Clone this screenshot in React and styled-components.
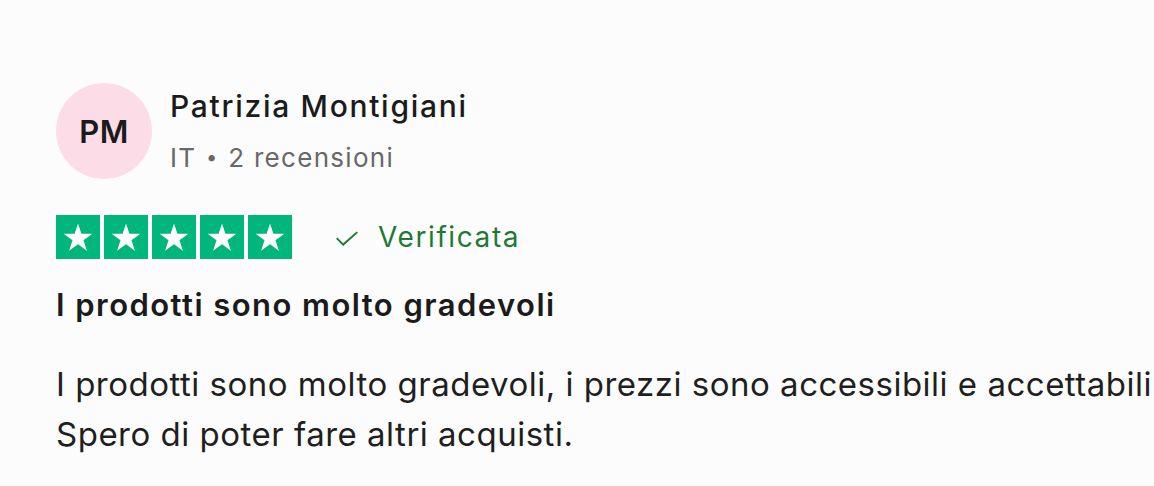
import styled, { createGlobalStyle } from "styled-components";

const GlobalStyle = createGlobalStyle`
  html, body {
    margin: 0;
    padding: 0;
    background: #fcfcfc;
    overflow: hidden;
  }
  body {
    font-family: Inter, "Liberation Sans", sans-serif;
    color: #1b1b1b;
  }
`;

const Card = styled.article`
  width: 1154px;
  height: 486px;
  padding: 83px 0 0 56px;
  box-sizing: border-box;
  white-space: nowrap;
`;

const Header = styled.header`
  display: flex;
  align-items: flex-start;
  gap: 18px;
`;

const Avatar = styled.div`
  width: 96px;
  height: 96px;
  border-radius: 50%;
  background: #fcdce7;
  display: flex;
  align-items: center;
  justify-content: center;
  font-size: 31px;
  font-weight: 600;
  letter-spacing: 0.5px;
  color: #1b1b1b;
  flex-shrink: 0;
`;

const Consumer = styled.div`
  display: flex;
  flex-direction: column;
  padding-top: 5px;
  gap: 15px;
`;

const Name = styled.span`
  font-size: 30px;
  font-weight: 500;
  line-height: 36px;
  letter-spacing: 1.7px;
`;

const Meta = styled.span`
  font-size: 26px;
  line-height: 36px;
  letter-spacing: 1.3px;
  color: #686868;
`;

const Dot = styled.span`
  font-size: 20px;
  vertical-align: 3px;
  margin: 0 1px;
`;

const RatingRow = styled.div`
  display: flex;
  align-items: center;
  gap: 42px;
  margin-top: 36px;
`;

const Stars = styled.div`
  display: flex;
  gap: 4px;
`;

const StarBox = styled.div`
  width: 44px;
  height: 44px;
  background: ${({ $on }) => ($on ? "#00b67a" : "#dcdce6")};
  display: flex;
  align-items: center;
  justify-content: center;
`;

const Verified = styled.div`
  display: flex;
  align-items: center;
  gap: 18px;
  color: #1c7a34;
  font-size: 28px;
  line-height: 36px;
  letter-spacing: 1.6px;
`;

const Title = styled.h2`
  margin: 26px 0 0;
  font-size: 31px;
  font-weight: 600;
  line-height: 40px;
  letter-spacing: 1.45px;
`;

const Body = styled.p`
  margin: 34px 0 0;
  font-size: 33px;
  line-height: 50px;
  letter-spacing: 0.5px;
  color: #1f1f1f;
`;

const Star = () => (
  <svg width="32" height="32" viewBox="0 0 24 24">
    <path
      fill="#fff"
      d="M12 1.8l2.55 7.85h8.25l-6.68 4.85 2.55 7.85L12 17.5l-6.67 4.85 2.55-7.85L1.2 9.65h8.25z"
    />
  </svg>
);

const Check = () => (
  <svg width="26" height="26" viewBox="0 0 24 24" fill="none">
    <path d="M2.5 13l6 6L21.5 7.5" stroke="#1c7a34" strokeWidth="1.8" />
  </svg>
);

const App = () => (
  <>
    <GlobalStyle />
    <Card>
      <Header>
        <Avatar>PM</Avatar>
        <Consumer>
          <Name>Patrizia Montigiani</Name>
          <Meta>
            IT <Dot>•</Dot> 2 recensioni
          </Meta>
        </Consumer>
      </Header>
      <RatingRow>
        <Stars>
          {[1, 2, 3, 4, 5].map((n) => (
            <StarBox key={n} $on>
              <Star />
            </StarBox>
          ))}
        </Stars>
        <Verified>
          <Check />
          Verificata
        </Verified>
      </RatingRow>
      <Title>I prodotti sono molto gradevoli</Title>
      <Body>
        I prodotti sono molto gradevoli, i prezzi sono accessibili e accettabili.
        <br />
        Spero di poter fare altri acquisti.
      </Body>
    </Card>
  </>
);

export default App;
